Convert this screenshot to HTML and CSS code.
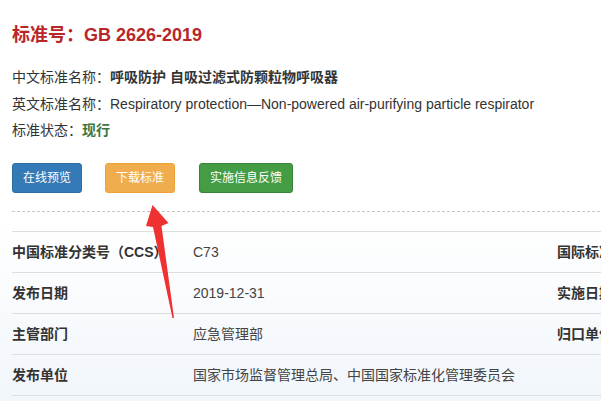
FILE: index.html
```html
<!DOCTYPE html>
<html lang="zh-CN">
<head>
    <meta charset="utf-8" />
    <title>GB 2626-2019 呼吸防护 自吸过滤式防颗粒物呼吸器</title>
    <link rel="stylesheet" href="styles.css">
</head>
<body>
    <div class="page">
        <h1 class="std-title">标准号：GB 2626-2019</h1>

        <div class="std-info">
            <p>中文标准名称：<strong>呼吸防护 自吸过滤式防颗粒物呼吸器</strong></p>
            <p>英文标准名称：Respiratory protection—Non-powered air-purifying particle respirator</p>
            <p>标准状态：<span class="status-ok">现行</span></p>
        </div>

        <div class="btn-bar">
            <a class="btn btn-blue" href="javascript:void(0)">在线预览</a>
            <a class="btn btn-orange" href="javascript:void(0)">下载标准</a>
            <a class="btn btn-green" href="javascript:void(0)">实施信息反馈</a>
        </div>

        <div class="dash-line"></div>

        <table class="std-table">
            <colgroup>
                <col class="col-label" />
                <col class="col-value" />
                <col class="col-label2" />
                <col />
            </colgroup>
            <tr>
                <th>中国标准分类号（CCS）</th>
                <td>C73</td>
                <th>国际标准分类号（ICS）</th>
                <td>13.340.30</td>
            </tr>
            <tr>
                <th>发布日期</th>
                <td>2019-12-31</td>
                <th>实施日期</th>
                <td>2020-07-01</td>
            </tr>
            <tr>
                <th>主管部门</th>
                <td>应急管理部</td>
                <th>归口单位</th>
                <td>全国个体防护装备标准化技术委员会</td>
            </tr>
            <tr>
                <th>发布单位</th>
                <td colspan="3">国家市场监督管理总局、中国国家标准化管理委员会</td>
            </tr>
        </table>

        <!-- 标注箭头 -->
        <svg class="mark-arrow" width="40" height="125" viewBox="0 0 40 125">
            <polygon points="12.5,5 28.5,23 21.5,26 34,118 32.5,118 13,27 6,26" fill="#ef3131" />
        </svg>
    </div>
</body>
</html>
```

FILE: styles.css
```css
* {margin: 0;padding: 0;box-sizing: border-box;}
html, body {overflow: hidden;}
body {font: 14px/26px "Liberation Sans", Arial, "Noto Sans CJK SC", sans-serif;color: #333;background: linear-gradient(to bottom, #fff 0, #fff 55%, #f1f6fb 100%);min-height: 401px;}
a {text-decoration: none;}

.page {position: relative;width: 1000px;padding: 23px 0 0 12px;}

/*标题*/
.std-title {font-size: 18px;line-height: 24px;font-weight: bold;color: #b9262a;}

/*基本信息*/
.std-info {margin-top: 17px;}
.std-info p {line-height: 26.5px;}
.std-info strong {font-weight: bold;color: #333;}
.status-ok {color: #3c763d;font-weight: bold;}

/*按钮*/
.btn-bar {display: flex;gap: 23px;margin-top: 19px;}
.btn {display: block;height: 30px;line-height: 28px;padding: 0 10px;font-size: 12px;color: #fff;border: 1px solid transparent;border-radius: 3px;}
.btn-blue {background: #337ab7;border-color: #2e6da4;}
.btn-orange {background: #f0ad4e;border-color: #eea236;}
.btn-green {background: #449d44;border-color: #398439;margin-left: 1px;}

.dash-line {height: 1px;margin-top: 18px;background: repeating-linear-gradient(to right, #c8c8c8 0, #c8c8c8 3px, transparent 3px, transparent 5px);}

/*参数表*/
.std-table {width: 988px;table-layout: fixed;margin-top: 19px;border-collapse: collapse;border-top: 1px solid #dedede;}
.std-table .col-label {width: 181px;}
.std-table .col-value {width: 364px;}
.std-table .col-label2 {width: 200px;}
.std-table th, .std-table td {height: 41px;padding: 0;text-align: left;vertical-align: middle;border-bottom: 1px solid #dedede;white-space: nowrap;overflow: hidden;}
.std-table th {font-weight: bold;color: #333;}
.std-table td {color: #444;}

.mark-arrow {position: absolute;left: 140px;top: 200px;}
```
